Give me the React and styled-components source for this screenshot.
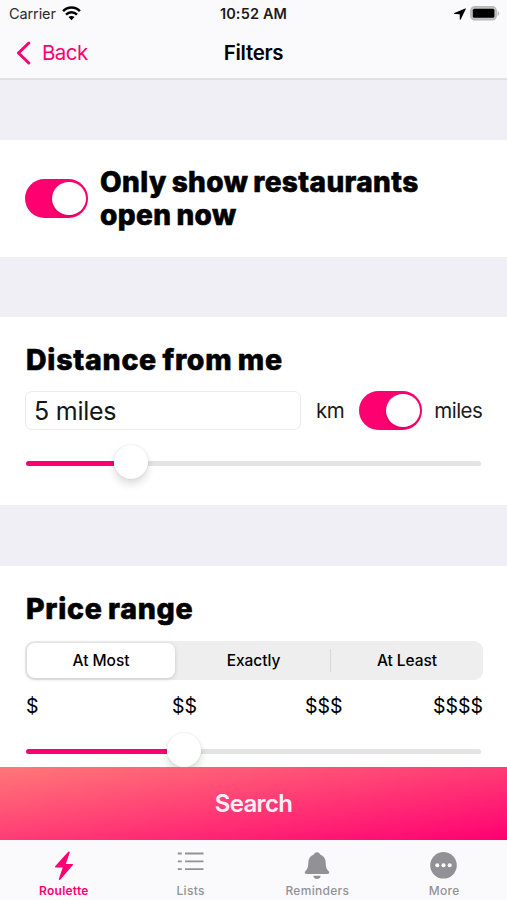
import React from "react";
import styled, { createGlobalStyle } from "styled-components";

const PINK = "#ff0070";
const GREY = "#929296";

const GlobalStyle = createGlobalStyle`
  * { box-sizing: border-box; }
  body {
    margin: 0;
    background: #fff;
    color: #000;
    font-family: Inter, "Liberation Sans", sans-serif;
  }
  button { font: inherit; border: 0; padding: 0; background: none; color: inherit; }
`;

const Screen = styled.div`
  display: flex;
  flex-direction: column;
  width: 507px;
  height: 900px;
  overflow: hidden;
`;

const Header = styled.header`
  flex: none;
  height: 80px;
  background: #fafafc;
  border-bottom: 2px solid #dfdfe2;
`;

const StatusBar = styled.div`
  display: grid;
  grid-template-columns: 1fr auto 1fr;
  align-items: center;
  height: 27px;
  padding: 0 7px 0 9px;
  font-size: 14.5px;
  line-height: 27px;
`;

const Carrier = styled.div`
  display: flex;
  align-items: center;
  gap: 6px;
  color: #2a2a2c;
  letter-spacing: -0.1px;
`;

const Clock = styled.div`
  margin-right: 2px;
  font-weight: 600;
  letter-spacing: 0.15px;
  color: #1a1a1c;
`;

const StatusIcons = styled.div`
  display: flex;
  justify-content: flex-end;
  align-items: center;
  gap: 4px;
`;

const NavBar = styled.div`
  display: grid;
  grid-template-columns: 1fr auto 1fr;
  align-items: center;
  height: 51px;
  padding: 0 16px;
`;

const BackButton = styled.button`
  display: flex;
  align-items: center;
  gap: 11px;
  color: ${PINK};
  font-size: 20.5px;
  letter-spacing: -0.55px;
`;

const Title = styled.h1`
  margin: 0;
  font-size: 20.5px;
  font-weight: 600;
  letter-spacing: -0.3px;
`;

const Content = styled.main`
  flex: 1;
  min-height: 0;
  overflow: hidden;
  background: #f0eff5;
`;

const Section = styled.section`
  height: ${(p) => p.$height}px;
  margin-top: ${(p) => p.$gap}px;
  padding: 0 25px;
  background: #fff;
`;

const OpenNowRow = styled.div`
  display: flex;
  align-items: center;
  gap: 12px;
  height: 100%;
`;

const Heading = styled.h2`
  margin: 0;
  font-size: 28px;
  line-height: 33px;
  font-weight: 800;
  letter-spacing: 0.4px;
  word-spacing: -1.5px;
  -webkit-text-stroke: 0.6px #000;
`;

const SectionHeading = styled(Heading)`
  padding: 26px 0 1px 1px;
  font-size: 28.5px;
  letter-spacing: 0.75px;
`;

const Switch = styled.button`
  flex: none;
  display: flex;
  justify-content: flex-end;
  width: 63px;
  height: 39px;
  padding: 3px 2px;
  border-radius: 20px;
  background: ${PINK};
`;

const SwitchKnob = styled.span`
  width: 34px;
  height: 33px;
  border-radius: 50%;
  background: #fff;
  box-shadow: -1px 2px 4px rgba(120, 0, 50, 0.25);
`;

const DistanceRow = styled.div`
  display: flex;
  align-items: center;
  width: 460px;
  height: 39px;
  margin-top: 14px;
`;

const DistanceField = styled.div`
  flex: none;
  width: 276px;
  height: 39px;
  padding-left: 8px;
  border: 1px solid #ebebec;
  border-radius: 7px;
  font-size: 25px;
  line-height: 38px;
  letter-spacing: -0.25px;
  color: #151515;
`;

const Unit = styled.span`
  margin: ${(p) => p.$margin};
  font-size: 20.5px;
  letter-spacing: -0.5px;
  color: #1a1a1a;
`;

const Slider = styled.div`
  display: flex;
  align-items: center;
  height: 34px;
  margin-top: ${(p) => p.$top}px;
  padding: 0 1px;
`;

const Fill = styled.span`
  width: ${(p) => p.$width}px;
  height: 5px;
  margin-top: 2px;
  border-radius: 3px 0 0 3px;
  background: ${PINK};
`;

const Thumb = styled.span`
  flex: none;
  z-index: 1;
  width: 34px;
  height: 34px;
  border-radius: 50%;
  background: #fff;
  box-shadow: 0 0 2px rgba(0, 0, 0, 0.13), 0 5px 9px rgba(0, 0, 0, 0.14);
`;

const Rest = styled.span`
  flex: 1;
  height: 5px;
  margin-top: 2px;
  border-radius: 0 3px 3px 0;
  background: #e3e3e4;
`;

const Segments = styled.div`
  display: grid;
  grid-template-columns: 148px 1fr 1px 150px;
  align-items: center;
  width: 458px;
  height: 39px;
  margin-top: 15px;
  padding: 2px;
  border-radius: 9px;
  background: #eeeeef;
`;

const Segment = styled.button`
  height: 35px;
  padding-left: ${(p) => (p.$active ? 0 : 2)}px;
  border-radius: 8px;
  font-size: 15.5px;
  font-weight: 500;
  letter-spacing: -0.05px;
  text-align: center;
  background: ${(p) => (p.$active ? "#fff" : "transparent")};
  box-shadow: ${(p) => (p.$active ? "0 1px 4px rgba(0,0,0,.17)" : "none")};
`;

const Divider = styled.span`
  height: 23px;
  background: #d8d8da;
`;

const Prices = styled.div`
  display: grid;
  grid-template-columns: 146px 133px 1fr auto;
  width: 458px;
  margin-top: 13px;
  padding-left: 1px;
  font-size: 19.5px;
  line-height: 26px;
  letter-spacing: 0;
`;

const SearchButton = styled.button`
  flex: none;
  height: 73px;
  background: linear-gradient(to bottom right, #ff7878, #ff0072);
  color: #fff0f5;
  font-size: 24px;
  font-weight: 600;
  letter-spacing: -0.65px;
`;

const TabBar = styled.nav`
  flex: none;
  display: grid;
  grid-template-columns: repeat(4, 1fr);
  height: 60px;
  background: #fafafc;
`;

const Tab = styled.button`
  display: flex;
  flex-direction: column;
  align-items: center;
  padding-top: 8px;
  padding-left: 1px;
  color: ${(p) => (p.$active ? PINK : GREY)};
  font-size: 12px;
  line-height: 16px;
  font-weight: ${(p) => (p.$active ? 600 : 500)};
  letter-spacing: ${(p) => (p.$active ? 0.25 : 0.3)}px;
  svg { flex: none; margin-bottom: 1px; }
`;

const WifiIcon = () => (
  <svg width="19" height="15" viewBox="0 0 19 15" fill="none" stroke="#000" strokeWidth="2.5">
    <path d="M1.1 5.2C5.8.3 13.2.3 17.9 5.2" />
    <path d="M4 8.6c3.2-3.2 7.8-3.2 11 0" />
    <path d="M9.5 14.2 6.5 11.1c1.6-1.6 4.4-1.6 6 0Z" fill="#000" stroke="none" />
  </svg>
);

const LocationIcon = () => (
  <svg width="12" height="12" viewBox="0 0 12 12">
    <path d="M11.2.4.4 5.1c-.5.2-.4.9.2.9l5.1.2.1 5.1c0 .6.7.7.9.2L11.8 1c.2-.4-.2-.8-.6-.6Z" />
  </svg>
);

const BatteryIcon = () => (
  <svg width="30" height="15" viewBox="0 0 30 15">
    <rect x=".8" y=".8" width="25.4" height="13" rx="4" fill="#c4c4c4" stroke="#b8b8b8" strokeWidth="1.5" />
    <rect x="2.8" y="2.8" width="21.6" height="9" rx="1.5" />
    <path d="M27.6 5v5c2.2-.7 2.2-4.3 0-5Z" fill="#b8b8b8" />
  </svg>
);

const ChevronIcon = () => (
  <svg width="15" height="24" viewBox="0 0 15 24" fill="none" stroke="currentColor" strokeWidth="3">
    <path d="M12.8 2 2.5 12l10.3 10" strokeLinecap="round" strokeLinejoin="round" />
  </svg>
);

const BoltIcon = () => (
  <svg width="30" height="34" viewBox="0 0 30 34" fill="currentColor">
    <path d="M19 4 6.2 18.2c-.5.6-.2 1.2.5 1.2h7L10 30.6c-.5 1.5.5 1.9 1.4.9l12.3-14.2c.5-.6.2-1.2-.5-1.2h-6.4l3.8-11.2C21 3.4 20 2.9 19 4Z" />
  </svg>
);

const ListIcon = () => (
  <svg width="30" height="34" viewBox="0 0 30 34" stroke="currentColor" strokeWidth="1.8">
    <path d="M1.8 5.5h4M1.8 13.3h4M1.8 21.1h4M9 5.5h18.5M9 13.3h18.5M9 21.1h18.5" />
  </svg>
);

const BellIcon = () => (
  <svg width="30" height="34" viewBox="0 0 30 34" fill="currentColor">
    <path d="M15 4.2c-1.7 0-2.8 1-3.2 2.4-3.5 1.2-5.4 4.1-5.5 8.2-.1 4.6-.8 6.2-2.8 8.2-1.4 1.5-.8 3 1 3h21c1.8 0 2.4-1.5 1-3-2-2-2.7-3.6-2.8-8.2-.1-4.1-2-7-5.5-8.2-.4-1.4-1.5-2.4-3.2-2.4ZM11.3 27.7c.5 4.4 6.9 4.4 7.4 0Z" />
  </svg>
);

const MoreIcon = () => (
  <svg width="30" height="34" viewBox="0 0 30 34">
    <circle cx="14.5" cy="17.3" r="13.3" fill="currentColor" />
    <g fill="#fff">
      <circle cx="8.3" cy="17.3" r="2" />
      <circle cx="14.5" cy="17.3" r="2" />
      <circle cx="20.7" cy="17.3" r="2" />
    </g>
  </svg>
);

const tabs = [
  { label: "Roulette", Icon: BoltIcon },
  { label: "Lists", Icon: ListIcon },
  { label: "Reminders", Icon: BellIcon },
  { label: "More", Icon: MoreIcon },
];

const Toggle = ({ label }) => (
  <Switch role="switch" aria-checked="true" aria-label={label}>
    <SwitchKnob />
  </Switch>
);

const RangeSlider = ({ top, fill }) => (
  <Slider $top={top}>
    <Fill $width={fill} />
    <Thumb />
    <Rest />
  </Slider>
);

export default function App() {
  return (
    <Screen>
      <GlobalStyle />
      <Header>
        <StatusBar>
          <Carrier>
            Carrier
            <WifiIcon />
          </Carrier>
          <Clock>10:52 AM</Clock>
          <StatusIcons>
            <LocationIcon />
            <BatteryIcon />
          </StatusIcons>
        </StatusBar>
        <NavBar>
          <BackButton>
            <ChevronIcon />
            Back
          </BackButton>
          <Title>Filters</Title>
        </NavBar>
      </Header>
      <Content>
        <Section $gap={60} $height={117}>
          <OpenNowRow>
            <Toggle label="Open now" />
            <Heading>
              Only show restaurants
              <br />
              open now
            </Heading>
          </OpenNowRow>
        </Section>
        <Section $gap={60} $height={188}>
          <SectionHeading>Distance from me</SectionHeading>
          <DistanceRow>
            <DistanceField>5 miles</DistanceField>
            <Unit $margin="0 15px">km</Unit>
            <Toggle label="Use miles" />
            <Unit $margin="0 0 0 12px">miles</Unit>
          </DistanceRow>
          <RangeSlider top={15} fill={88} />
        </Section>
        <Section $gap={61} $height={240}>
          <SectionHeading>Price range</SectionHeading>
          <Segments>
            <Segment $active>At Most</Segment>
            <Segment>Exactly</Segment>
            <Divider />
            <Segment>At Least</Segment>
          </Segments>
          <Prices>
            <span>$</span>
            <span>$$</span>
            <span>$$$</span>
            <span>$$$$</span>
          </Prices>
          <RangeSlider top={14} fill={141} />
        </Section>
      </Content>
      <SearchButton>Search</SearchButton>
      <TabBar>
        {tabs.map(({ label, Icon }, i) => (
          <Tab key={label} $active={i === 0}>
            <Icon />
            {label}
          </Tab>
        ))}
      </TabBar>
    </Screen>
  );
}
